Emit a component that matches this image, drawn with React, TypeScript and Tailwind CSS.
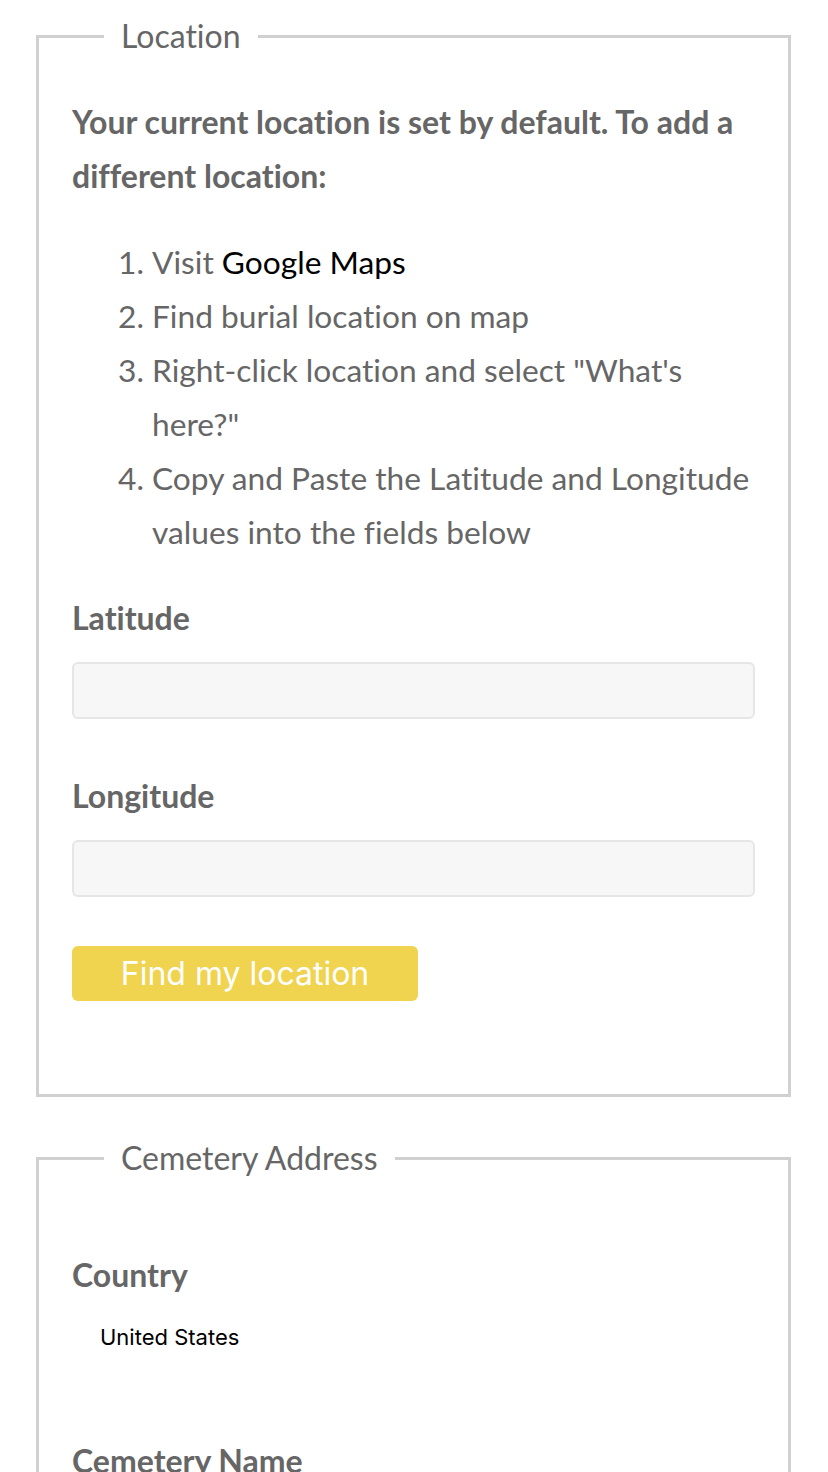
export default function App() {
  const steps = [
    <>
      Visit <a className="text-black">Google Maps</a>
    </>,
    <>Find burial location on map</>,
    <>Right-click location and select "What's here?"</>,
    <>Copy and Paste the Latitude and Longitude values into the fields below</>,
  ];

  return (
    <div className="min-h-screen bg-white pl-[36px] pr-[37px] pt-[18px] font-['Lato',sans-serif] text-[#666666] [font-variant-ligatures:none]">
      <fieldset className="border-[3px] border-[#d0d0d0] px-[33px] pt-[41px] pb-[93px]">
        <legend className="ml-[32px] px-[17px] text-[32px] leading-[36px]">Location</legend>

        <p className="text-[32px] font-bold leading-[54px]">
          Your current location is set by default. To add a different location:
        </p>

        <ol className="mt-[32px] list-decimal pl-[80px] text-[31.7px] leading-[54px]">
          {steps.map((s, i) => (
            <li key={i}>{s}</li>
          ))}
        </ol>

        <label className="mt-[32px] block text-[32px] font-bold leading-[54px]">Latitude</label>
        <input
          type="text"
          className="mt-[17px] block h-[57px] w-full rounded-[6px] border-2 border-[#e6e6e6] bg-[#f7f7f7]"
        />

        <label className="mt-[50px] block text-[32px] font-bold leading-[54px]">Longitude</label>
        <input
          type="text"
          className="mt-[17px] block h-[57px] w-full rounded-[6px] border-2 border-[#e6e6e6] bg-[#f7f7f7]"
        />

        <button
          type="button"
          className="mt-[49px] block h-[55px] w-[346px] rounded-[6px] bg-[#f0d34f] text-center font-['Inter',sans-serif] text-[32px] leading-[55px] text-white"
        >
          Find my location
        </button>
      </fieldset>

      <fieldset className="mt-[43px] border-[3px] border-[#d0d0d0] px-[33px] pt-[72px] pb-[60px]">
        <legend className="ml-[32px] px-[17px] text-[32px] leading-[36px]">Cemetery Address</legend>

        <label className="block text-[32px] font-bold leading-[54px]">Country</label>
        <div className="pl-[28px] pt-[20px] font-['Inter',sans-serif] text-[22px] leading-[30px] text-black">
          United States
        </div>

        <label className="mt-[82px] block text-[32px] font-bold leading-[54px]">Cemetery Name</label>
        <input
          type="text"
          className="mt-[17px] block h-[57px] w-full rounded-[6px] border-2 border-[#e6e6e6] bg-[#f7f7f7]"
        />
      </fieldset>
    </div>
  );
}
